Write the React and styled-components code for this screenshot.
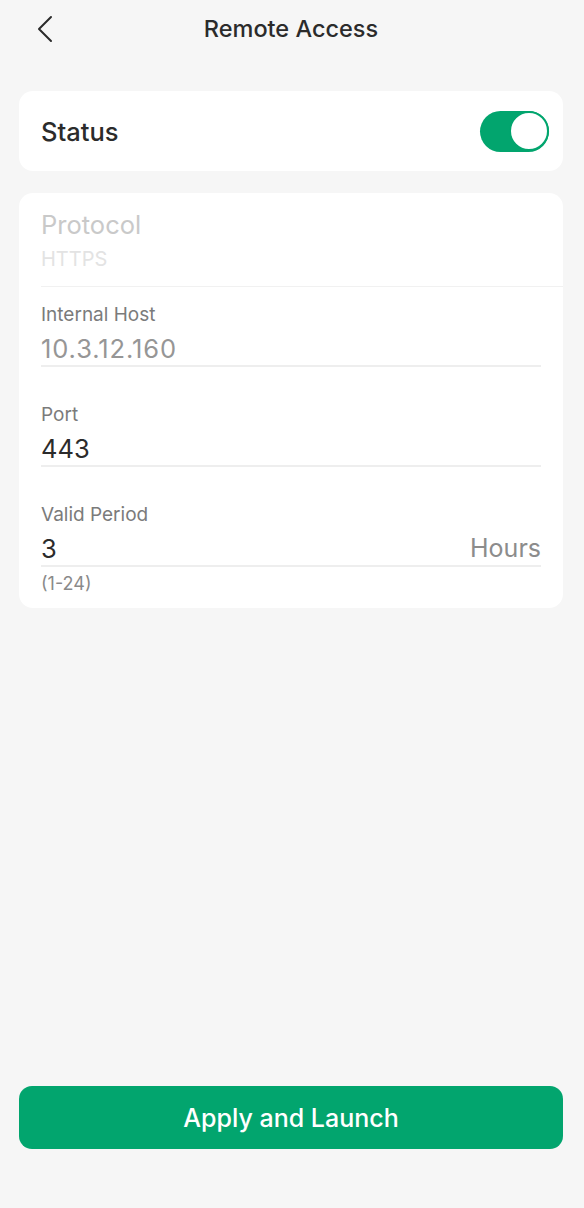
import React, { useState } from "react";
import styled, { createGlobalStyle } from "styled-components";

const GlobalStyle = createGlobalStyle`
  html, body {
    margin: 0;
    padding: 0;
    background: #f6f6f6;
    font-family: Inter, Roboto, "Noto Sans", Arial, sans-serif;
    -webkit-font-smoothing: antialiased;
  }
  * { box-sizing: border-box; }
`;

const Page = styled.div`
  min-height: 100vh;
  display: flex;
  flex-direction: column;
  padding: 0 21px 59px 19px;
`;

const Header = styled.header`
  height: 56px;
  display: flex;
  align-items: center;
  justify-content: center;
  position: relative;
`;

const BackButton = styled.button`
  position: absolute;
  left: 12px;
  top: 14px;
  width: 28px;
  height: 30px;
  padding: 0;
  border: none;
  background: none;
  display: flex;
  align-items: center;
  justify-content: center;
`;

const Title = styled.h1`
  margin: 0;
  font-size: 23.5px;
  font-weight: 500;
  color: #2b2b2b;
`;

const Card = styled.section`
  background: #fff;
  border-radius: 14px;
  margin-top: ${(p) => p.$top}px;
`;

const StatusRow = styled.div`
  height: 80px;
  display: flex;
  align-items: center;
  justify-content: space-between;
  padding: 0 14px 0 22px;
`;

const StatusLabel = styled.span`
  font-size: 25.5px;
  font-weight: 500;
  color: #2b2b2b;
`;

const Toggle = styled.button`
  width: 69px;
  height: 41px;
  border-radius: 21px;
  border: none;
  padding: 0;
  background: ${(p) => (p.$on ? "#02a56e" : "#d9d9d9")};
  display: flex;
  align-items: center;
  justify-content: ${(p) => (p.$on ? "flex-end" : "flex-start")};
`;

const Thumb = styled.span`
  width: 40px;
  height: 40px;
  border-radius: 50%;
  background: #fff;
  border: 2.5px solid ${(p) => (p.$on ? "#02a56e" : "#d9d9d9")};
`;

const ProtocolBlock = styled.div`
  margin-left: 22px;
  padding: 15px 0 10px;
  border-bottom: 1px solid #f1f1f1;
`;

const ProtocolName = styled.div`
  font-size: 25.5px;
  line-height: 34px;
  color: #c9c9c9;
`;

const ProtocolValue = styled.div`
  font-size: 20px;
  line-height: 34px;
  color: #e3e3e3;
`;

const Fields = styled.div`
  padding: 16px 22px 13px;
`;

const Field = styled.div`
  & + & {
    margin-top: 36px;
  }
`;

const FieldLabel = styled.div`
  font-size: 19px;
  line-height: 24px;
  color: #7b7b7b;
`;

const InputRow = styled.div`
  display: flex;
  align-items: center;
  justify-content: space-between;
  height: 40px;
  padding-top: 4px;
  border-bottom: 2px solid #eeeeee;
`;

const Value = styled.span`
  font-size: 25.5px;
  letter-spacing: ${(p) => (p.$muted ? "0.9px" : "0")};
  color: ${(p) => (p.$muted ? "#969696" : "#2b2b2b")};
`;

const Unit = styled.span`
  font-size: 25px;
  color: #8c8c8c;
`;

const Hint = styled.div`
  margin-top: 6px;
  font-size: 18px;
  line-height: 22px;
  color: #8a8a8a;
`;

const Spacer = styled.div`
  flex: 1;
`;

const ApplyButton = styled.button`
  height: 63px;
  width: 100%;
  border: none;
  border-radius: 13px;
  background: #02a56e;
  color: #fff;
  font-family: inherit;
  font-size: 25px;
  font-weight: 500;
`;

function ChevronLeft() {
  return (
    <svg width="18" height="28" viewBox="0 0 18 28" fill="none">
      <path d="M15 2 L3 14 L15 26" stroke="#2b2b2b" strokeWidth="2" strokeLinecap="round" strokeLinejoin="round" />
    </svg>
  );
}

export default function App() {
  const [enabled, setEnabled] = useState(true);

  return (
    <>
      <GlobalStyle />
      <Page>
        <Header>
          <BackButton aria-label="Back">
            <ChevronLeft />
          </BackButton>
          <Title>Remote Access</Title>
        </Header>

        <Card $top={35}>
          <StatusRow>
            <StatusLabel>Status</StatusLabel>
            <Toggle $on={enabled} onClick={() => setEnabled(!enabled)}>
              <Thumb $on={enabled} />
            </Toggle>
          </StatusRow>
        </Card>

        <Card $top={22}>
          <ProtocolBlock>
            <ProtocolName>Protocol</ProtocolName>
            <ProtocolValue>HTTPS</ProtocolValue>
          </ProtocolBlock>
          <Fields>
            <Field>
              <FieldLabel>Internal Host</FieldLabel>
              <InputRow>
                <Value $muted>10.3.12.160</Value>
              </InputRow>
            </Field>
            <Field>
              <FieldLabel>Port</FieldLabel>
              <InputRow>
                <Value>443</Value>
              </InputRow>
            </Field>
            <Field>
              <FieldLabel>Valid Period</FieldLabel>
              <InputRow>
                <Value>3</Value>
                <Unit>Hours</Unit>
              </InputRow>
              <Hint>(1-24)</Hint>
            </Field>
          </Fields>
        </Card>

        <Spacer />
        <ApplyButton>Apply and Launch</ApplyButton>
      </Page>
    </>
  );
}
